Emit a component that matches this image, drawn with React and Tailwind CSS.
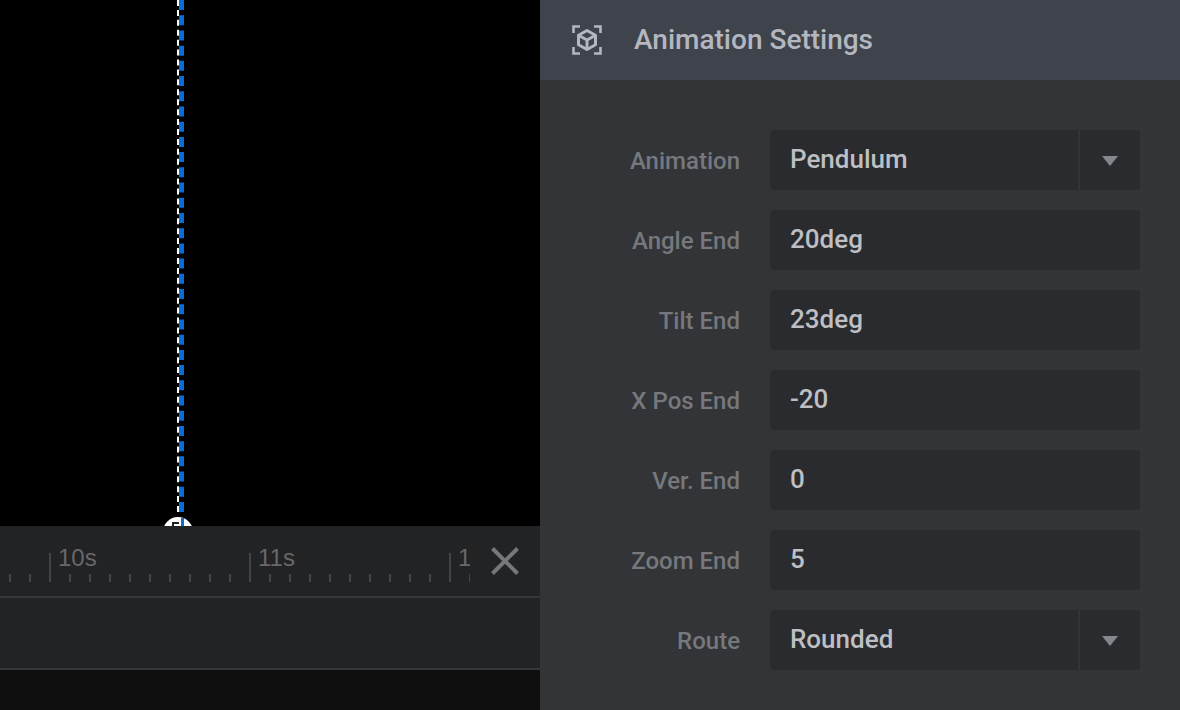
import React from 'react';

const settings = [
  { label: 'Animation', value: 'Pendulum', select: true },
  { label: 'Angle End', value: '20deg' },
  { label: 'Tilt End', value: '23deg' },
  { label: 'X Pos End', value: '-20' },
  { label: 'Ver. End', value: '0' },
  { label: 'Zoom End', value: '5' },
  { label: 'Route', value: 'Rounded', select: true },
];

const segments = [
  { label: '', ticks: 2 },
  { label: '10s', ticks: 10 },
  { label: '11s', ticks: 10 },
  { label: '1', ticks: 2 },
];

const CubeIcon = () => (
  <svg width="30" height="30" viewBox="0 0 30 30" fill="none" stroke="#b4b7bf" strokeWidth="3">
    <path d="M1.5 8V1.5H8M22 1.5H28.5V8M1.5 22V28.5H8M22 28.5H28.5V22" strokeWidth="2.6" />
    <path d="M15 5.5L23.5 10.2V19.8L15 24.5L6.5 19.8V10.2Z" strokeLinejoin="round" />
    <path d="M6.5 10.2L15 15L23.5 10.2M15 15V24.5" strokeLinejoin="round" />
  </svg>
);

const Ruler = () => (
  <div className="flex h-[70px] w-[470px] overflow-hidden pl-[9px] font-['Liberation_Sans',sans-serif]">
    {segments.map((segment, i) => (
      <div key={i} className={`relative flex shrink-0 items-end pb-[14px] ${i === 0 ? 'w-[40px]' : 'w-[200px]'}`}>
        {Array.from({ length: segment.ticks }).map((_, t) => {
          const major = i > 0 && t === 0;
          return (
            <div key={t} className="w-[20px] shrink-0">
              <div className={`w-[2px] bg-[#434446] ${major ? 'h-[29px]' : 'h-[8px]'}`}></div>
            </div>
          );
        })}
        {segment.label && (
          <span className="absolute left-[9px] top-[17px] text-[24px] leading-[30px] text-[#67686a]">
            {segment.label}
          </span>
        )}
      </div>
    ))}
  </div>
);

const SettingRow = ({ label, value, select }) => (
  <div className="flex h-[60px] items-center">
    <div className="w-[200px] pt-[2px] text-right text-[24px] font-medium text-[#76787c]">{label}</div>
    <div className="ml-[30px] flex h-[60px] w-[370px] items-stretch overflow-hidden rounded-[4px] bg-[#2a2b2f]">
      <div className="flex flex-1 items-center pb-[2px] pl-[20px] text-[26px] font-medium text-[#bdbfc3]">{value}</div>
      {select && (
        <div className="flex w-[62px] items-center justify-center border-l-2 border-[#323438] pt-[2px]">
          <div className="h-0 w-0 border-x-[8px] border-t-[10px] border-x-transparent border-t-[#85878c]"></div>
        </div>
      )}
    </div>
  </div>
);

const App = () => {
  return (
    <div className="flex h-[710px] w-[1180px] overflow-hidden font-['Roboto',sans-serif]">
      <div className="relative flex w-[540px] flex-col">
        <div className="relative h-[526px] overflow-hidden bg-black">
          {/* playhead */}
          <div className="absolute bottom-[14px] left-[177px] top-0 w-[2px] border-l-2 border-dashed border-white"></div>
          <div className="absolute bottom-[14px] left-[179px] top-0 w-[5px] border-l-[5px] border-dashed border-[#0a6cd6] bg-[#0a6cd6] bg-clip-padding"></div>
          <div className="absolute left-[163px] top-[517px] h-[30px] w-[30px] rounded-full bg-white"></div>
          <div className="absolute left-[181px] top-[518px] h-[8px] w-[3px] bg-[#0a6cd6]"></div>
          <div className="absolute left-[172px] top-[522px] h-[4px] w-[7px] border-l-2 border-t-2 border-[#222]"></div>
        </div>
        <div className="flex items-start justify-between border-b-2 border-[#363739] bg-[#222325]">
          <Ruler />
          <svg width="30" height="30" viewBox="0 0 30 30" className="mr-[20px] mt-[20px]" stroke="#77787a" strokeWidth="4">
            <path d="M2.5 2.5L27.5 27.5M27.5 2.5L2.5 27.5" />
          </svg>
        </div>
        <div className="h-[72px] border-b-2 border-[#363739] bg-[#222325]"></div>
        <div className="flex-1 bg-[#0f0f0f]"></div>
      </div>

      <div className="flex w-[640px] flex-col bg-[#323438]">
        <div className="flex h-[80px] items-center bg-[#3f434c] pl-[32px]">
          <CubeIcon />
          <h2 className="ml-[32px] text-[28px] font-medium text-[#b4b7bf]">Animation Settings</h2>
        </div>
        <div className="flex flex-col gap-[20px] pt-[50px]">
          {settings.map((s) => (
            <SettingRow key={s.label} {...s} />
          ))}
        </div>
      </div>
    </div>
  );
};

export default App;
